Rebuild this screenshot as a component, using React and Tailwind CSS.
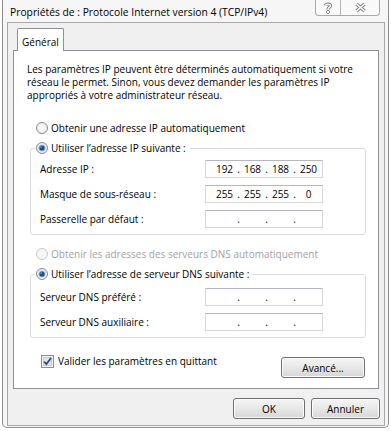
import React from 'react';

// Windows 7 style "Propriétés de : Protocole Internet version 4" dialog

const Radio = ({ checked, disabled }) => (
  <svg width="12" height="12" viewBox="0 0 12 12" className="shrink-0">
    <circle cx="6" cy="6" r="5.5" fill={disabled ? '#f4f4f4' : '#ececec'} stroke={disabled ? '#c9c9c9' : '#8c8c8c'} />
    <circle cx="6" cy="6" r="4.2" fill={disabled ? '#f7f7f7' : '#f6f6f6'} />
    {checked && (
      <>
        <circle cx="6" cy="6" r="3.6" fill="#9cc3e6" />
        <circle cx="6" cy="6" r="2.6" fill="#1d4f86" />
        <circle cx="5.2" cy="5.1" r="0.9" fill="#6fa3d6" />
      </>
    )}
  </svg>
);

const Checkbox = () => (
  <svg width="13" height="13" viewBox="0 0 13 13" className="shrink-0">
    <rect x="0.5" y="0.5" width="12" height="12" fill="#f2f2f2" stroke="#8e8f8f" />
    <rect x="2.5" y="2.5" width="8" height="8" fill="#e2e6ea" stroke="#c6ccd3" />
    <path d="M3.2 6.6 L5.4 9 L10 3" fill="none" stroke="#2d4b84" strokeWidth="1.8" />
  </svg>
);

const IpField = ({ parts = ['', '', '', ''] }) => (
  <div className="w-[118px] h-[18px] bg-white border border-[#d3d7dc] border-t-[#b4b8be] flex items-center pl-[7px] leading-[16px]">
    {parts.map((p, i) => (
      <React.Fragment key={i}>
        <span className="w-[23px] text-center">{p}</span>
        {i < 3 && <span className="w-[5px] text-center">.</span>}
      </React.Fragment>
    ))}
  </div>
);

const FieldRow = ({ label, parts }) => (
  <div className="flex items-center h-[18px]">
    <span className="w-[165px]">{label}</span>
    <IpField parts={parts} />
  </div>
);

const Button = ({ children, className = '' }) => (
  <button
    className={`h-[21px] rounded-[3px] border border-[#707070] bg-linear-to-b from-[#f5f5f5] via-[#e8e8e8] to-[#d6d6d6] shadow-[inset_0_0_0_1px_#fbfbfb] text-[10px] leading-none ${className}`}
  >
    {children}
  </button>
);

const GroupBox = ({ legend, children, className = '' }) => (
  <div className="ml-[16px] w-[336px] mt-[4px]">
    <div className="relative ml-[5px] w-fit h-[16px] flex items-center gap-[3px] pl-[1px] pr-[4px] bg-white">
      <Radio checked />
      <span>{legend}</span>
    </div>
    <div className={`-mt-[8px] border border-[#d8dce1] rounded-[3px] pl-[9px] pb-[6px] flex flex-col gap-[7px] ${className}`}>
      {children}
    </div>
  </div>
);

export default function App() {
  return (
    <div className="w-[391px] h-[431px] bg-white overflow-hidden font-['Open_Sans',sans-serif] text-[10px] text-black">
      <div className="ml-[2px] w-[387px] h-[428px] border-x border-b border-[#8d8d8d] rounded-b-[5px] bg-[#f6f6f6] flex flex-col">
        {/* Title bar */}
        <div className="h-[22px] flex justify-between">
          <span className="pl-[7px] pt-[5px] leading-[14px] text-[10.3px]">
            Propriétés de : Protocole Internet version 4 (TCP/IPv4)
          </span>
          <div className="mr-[8px] w-[65px] h-[16px] flex border-x border-b border-[#a9a9a9] rounded-b-[4px] bg-[#f9f9f9]">
            <div className="w-[25px] border-r border-[#b5b5b5] flex items-center justify-center">
              <svg width="10" height="12" viewBox="0 0 10 12">
                <path d="M2.6 3.6 C2.6 1.6 7.4 1.6 7.4 3.8 C7.4 5.4 5 5.4 5 7.4" fill="none" stroke="#7c7c7c" strokeWidth="3.2" />
                <path d="M2.6 3.6 C2.6 1.6 7.4 1.6 7.4 3.8 C7.4 5.4 5 5.4 5 7.4" fill="none" stroke="#ffffff" strokeWidth="1.4" />
                <circle cx="5" cy="10" r="1.6" fill="#ffffff" stroke="#7c7c7c" strokeWidth="0.9" />
              </svg>
            </div>
            <div className="flex-1 flex items-center justify-center">
              <svg width="13" height="11" viewBox="0 0 13 11">
                <path d="M2.5 2 L10.5 9 M10.5 2 L2.5 9" stroke="#7c7c7c" strokeWidth="3.4" />
                <path d="M2.5 2 L10.5 9 M10.5 2 L2.5 9" stroke="#ffffff" strokeWidth="1.6" />
              </svg>
            </div>
          </div>
        </div>

        {/* Client area */}
        <div className="ml-[4px] w-[378px] h-[404px] border border-[#a7a7a7] bg-[#f0f0f0] pl-[5px] pt-[5px] flex flex-col">
          {/* Tab header */}
          <div className="relative ml-[4px] -mb-[1px] w-[47px] h-[23px] border-x border-t border-[#8e9199] rounded-t-[2px] bg-white flex justify-center pt-[6px] leading-[14px]">
            Général
          </div>

          {/* Tab panel */}
          <div className="w-[366px] h-[339px] border border-[#8e9199] bg-white flex flex-col">
            <p className="pl-[13px] pt-[12px] leading-[13px]">
              Les paramètres IP peuvent être déterminés automatiquement si votre
              <br />
              réseau le permet. Sinon, vous devez demander les paramètres IP
              <br />
              appropriés à votre administrateur réseau.
            </p>

            <div className="mt-[18px] ml-[22px] h-[16px] flex items-center gap-[3px]">
              <Radio />
              <span>Obtenir une adresse IP automatiquement</span>
            </div>

            <GroupBox legend="Utiliser l’adresse IP suivante :" className="pt-[11px]">
              <FieldRow label="Adresse IP :" parts={['192', '168', '188', '250']} />
              <FieldRow label="Masque de sous-réseau :" parts={['255', '255', '255', '0']} />
              <FieldRow label="Passerelle par défaut :" />
            </GroupBox>

            <div className="mt-[11px] ml-[22px] h-[16px] flex items-center gap-[3px] text-[#a2a2a2]">
              <Radio disabled />
              <span>Obtenir les adresses des serveurs DNS automatiquement</span>
            </div>

            <GroupBox legend="Utiliser l’adresse de serveur DNS suivante :" className="pt-[13px]">
              <FieldRow label="Serveur DNS préféré :" />
              <FieldRow label="Serveur DNS auxiliaire :" />
            </GroupBox>

            <div className="mt-[17px] flex justify-between items-start pr-[13px]">
              <label className="ml-[27px] h-[13px] flex items-center gap-[4px]">
                <Checkbox />
                <span>Valider les paramètres en quittant</span>
              </label>
              <Button className="mt-[2px] w-[84px] h-[20px]">Avancé...</Button>
            </div>
          </div>

          {/* Dialog buttons */}
          <div className="mt-[9px] pr-[4px] flex justify-end gap-[6px]">
            <Button className="w-[72px]">OK</Button>
            <Button className="w-[69px]">Annuler</Button>
          </div>
        </div>
      </div>
    </div>
  );
}
